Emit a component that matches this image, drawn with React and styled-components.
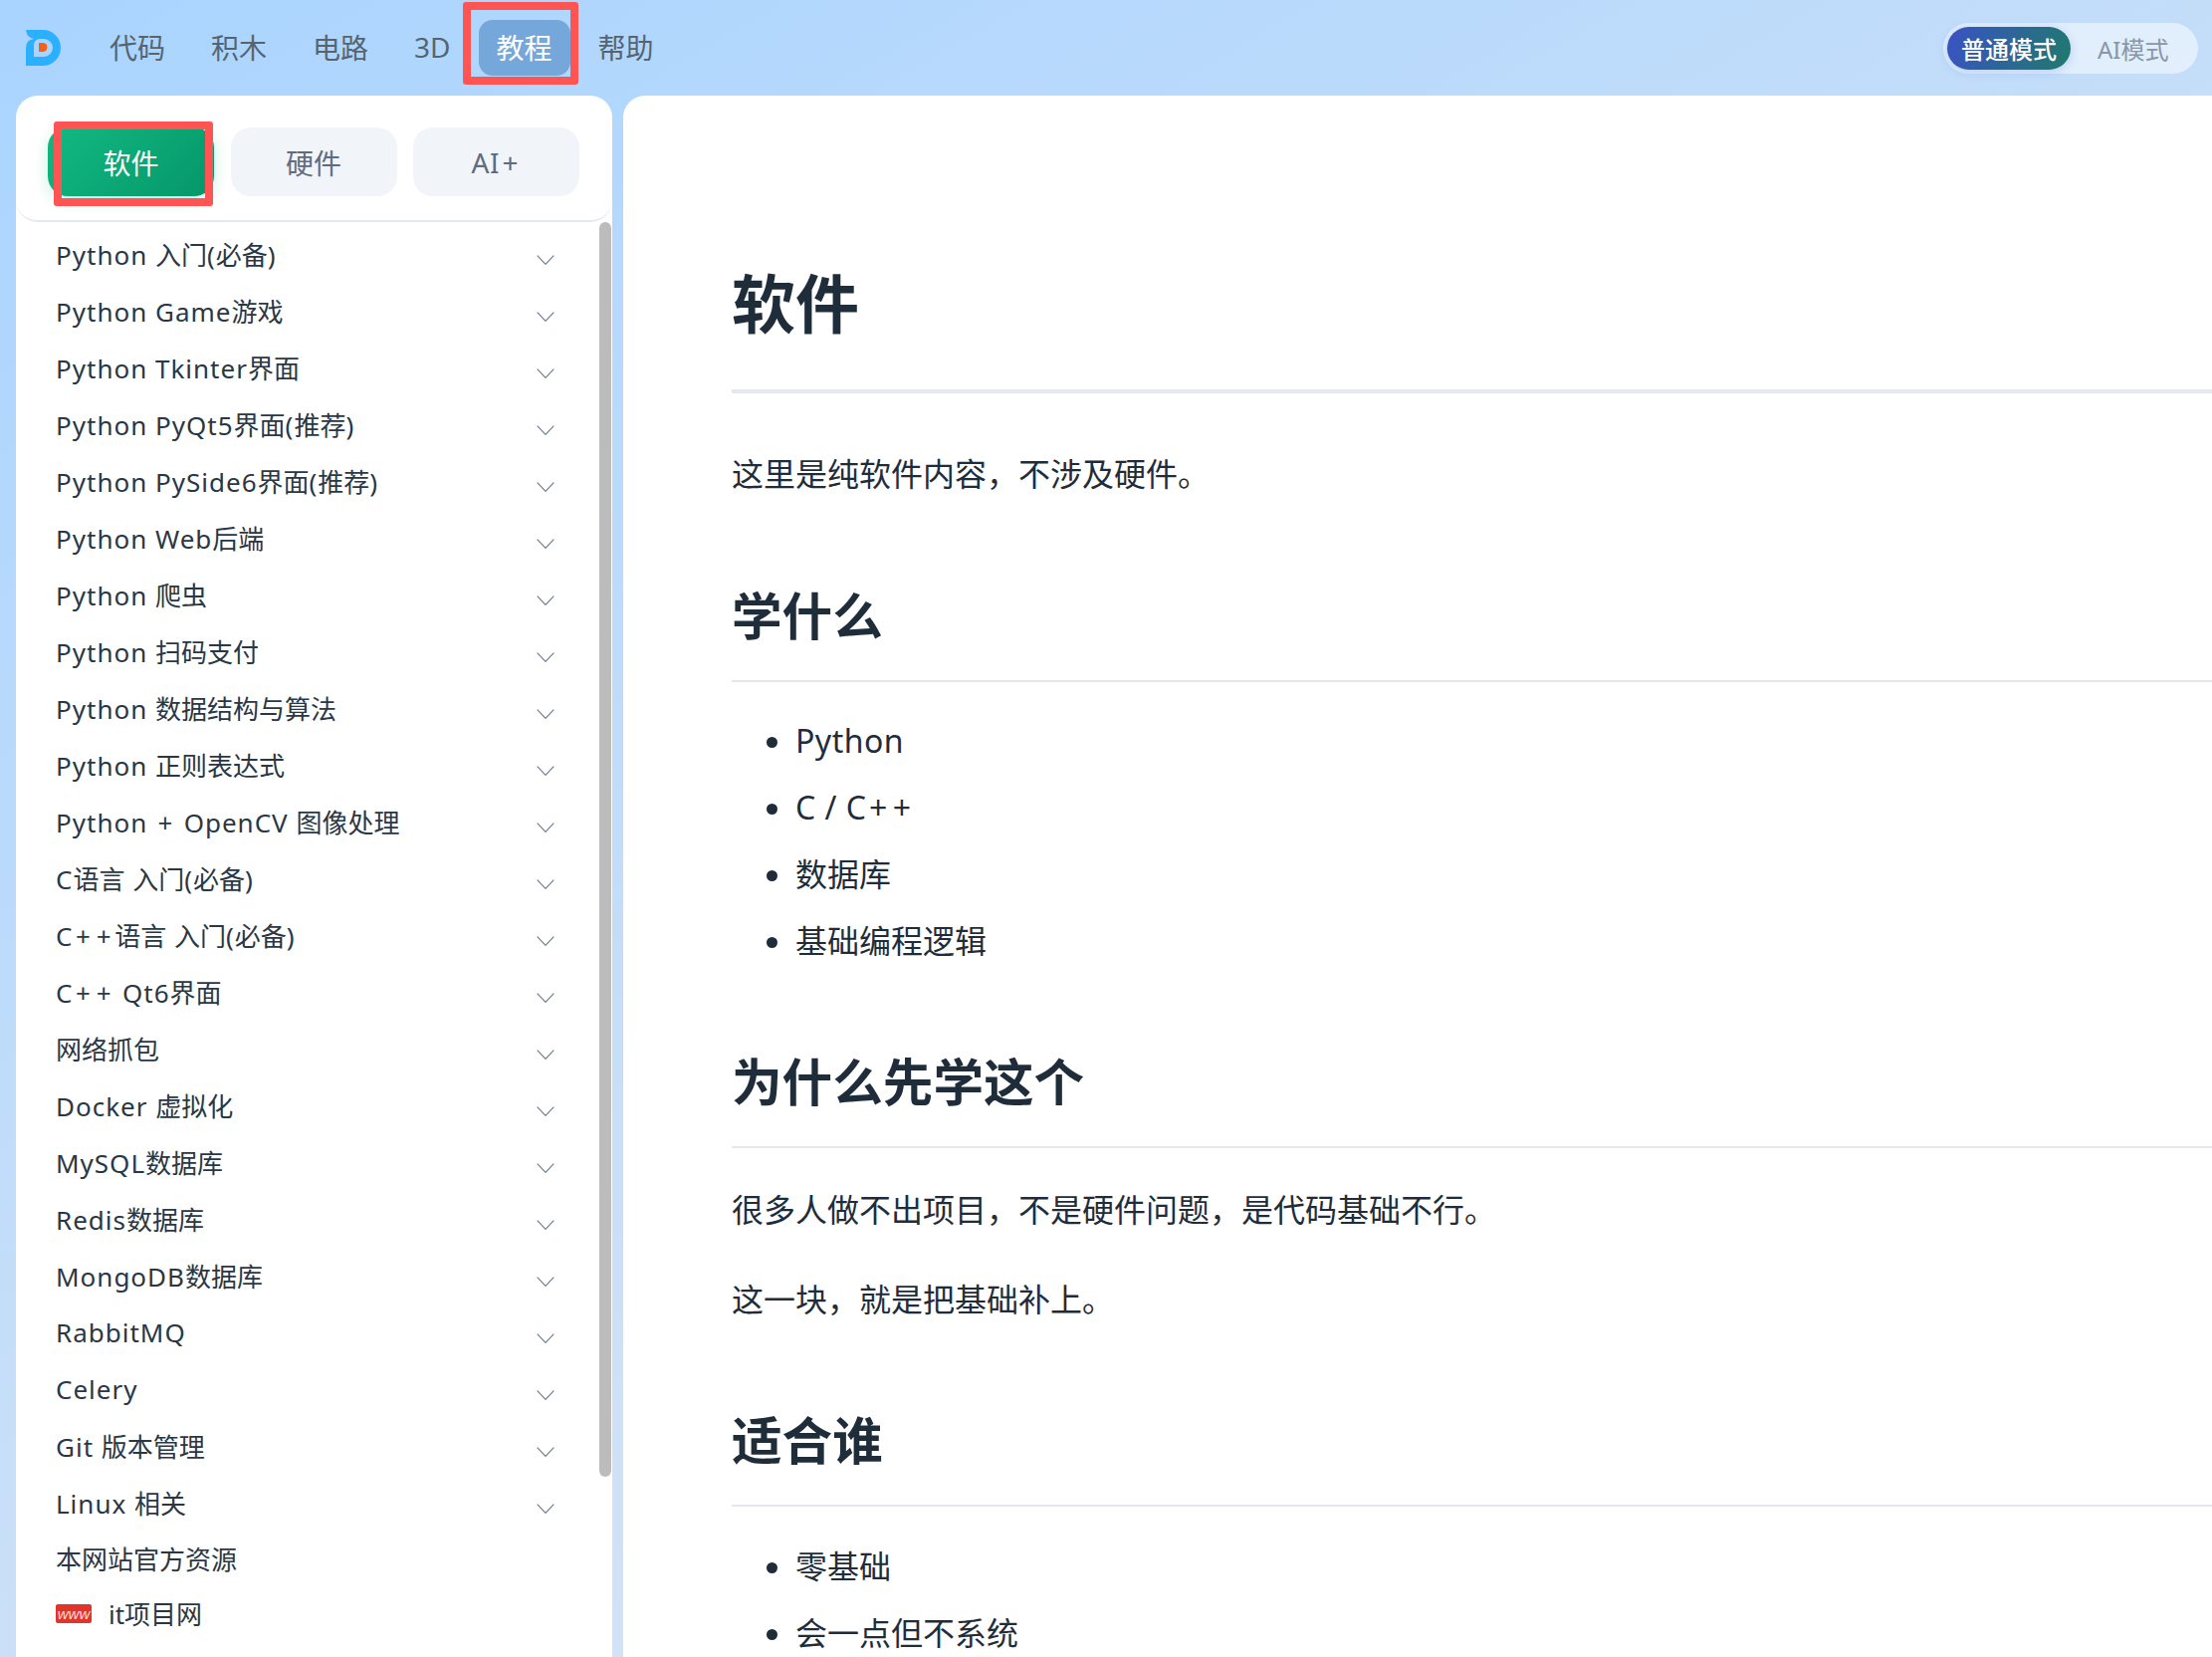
import React from "react";
import styled, { createGlobalStyle } from "styled-components";

const Global = createGlobalStyle`
  html, body { margin: 0; padding: 0; height: 1664px; overflow: hidden; }
  body { font-family: "Noto Sans", "Noto Sans CJK SC", sans-serif; color: #1f2d3a; }
  * { box-sizing: border-box; }
`;

const Page = styled.div`
  width: 2222px;
  height: 1664px;
  overflow: hidden;
  display: flex;
  flex-direction: column;
  background: linear-gradient(150deg, #a9d4ff 0%, #e5e9f2 100%);
`;
const TopBar = styled.header`
  height: 96px;
  flex: none;
  display: flex;
  align-items: flex-start;
  padding: 20px 14px 0 26px;
`;
const Logo = styled.svg`
  width: 36px;
  height: 36px;
  margin: 10px 30px 0 0;
  flex: none;
`;
const Nav = styled.nav`
  display: flex;
  gap: 10px;
`;
const NavItem = styled.div`
  position: relative;
  height: 56px;
  padding: 0 18px 2px;
  display: flex;
  align-items: center;
  border-radius: 14px;
  font-size: 28px;
  color: ${(p) => (p.$active ? "#fff" : "#56646f")};
  background: ${(p) => (p.$active ? "#75a7da" : "transparent")};
`;
const Highlight = styled.span`
  position: absolute;
  border: 8px solid #ff5454;
  border-radius: 3px;
  pointer-events: none;
`;
const NavHighlight = styled(Highlight)`
  left: -16px;
  top: -18px;
  width: 116px;
  height: 83px;
`;
const ModeSwitch = styled.div`
  margin: 3px 0 0 auto;
  width: 256px;
  height: 51px;
  padding: 4px;
  display: flex;
  align-items: center;
  border-radius: 26px;
  background: rgba(255, 255, 255, 0.5);
`;
const ModeOn = styled.div`
  width: 124px;
  height: 43px;
  display: flex;
  align-items: center;
  justify-content: center;
  border-radius: 22px;
  font-size: 24px;
  font-weight: 500;
  color: #fff;
  background: linear-gradient(110deg, #3a52c4, #1f7a6c);
  box-shadow: 0 2px 10px rgba(90, 130, 220, 0.3);
`;
const ModeOff = styled.div`
  margin-left: 27px;
  font-size: 24px;
  color: #8996a7;
`;
const Body = styled.div`
  flex: 1;
  min-height: 0;
  display: flex;
  gap: 11px;
  padding-left: 16px;
`;
const Sidebar = styled.aside`
  width: 599px;
  flex: none;
  background: #fff;
  border-radius: 22px 22px 0 0;
  display: flex;
  flex-direction: column;
`;
const TabBar = styled.div`
  height: 127px;
  flex: none;
  display: flex;
  gap: 16.5px;
  padding: 32px 0 0 32px;
  border-bottom: 2px solid #e4e8f3;
  border-radius: 0 0 22px 22px;
`;
const Tab = styled.div`
  position: relative;
  width: 167px;
  height: 69px;
  display: flex;
  align-items: center;
  justify-content: center;
  border-radius: 20px;
  font-size: 28px;
  color: ${(p) => (p.$active ? "#fff" : "#5f6c80")};
  background: ${(p) =>
    p.$active ? "linear-gradient(135deg, #12b981, #059669)" : "#f1f4f9"};
  box-shadow: ${(p) => (p.$active ? "0 4px 16px rgba(16,185,129,.22)" : "none")};
`;
const TabHighlight = styled(Highlight)`
  left: 6px;
  top: -6px;
  width: 160px;
  height: 85px;
`;
const SideBody = styled.div`
  flex: 1;
  min-height: 0;
  display: flex;
`;
const Tree = styled.ul`
  flex: 1;
  list-style: none;
  margin: 0;
  padding: 3px 45px 0 40px;
`;
const TreeRow = styled.li`
  height: 57px;
  display: flex;
  align-items: center;
  justify-content: space-between;
  font-size: 26px;
  color: #2a3744;
`;
const Chevron = styled.svg`
  width: 18px;
  height: 10px;
  margin-top: 12px;
  flex: none;
`;
const PlainLink = styled.li`
  height: 55px;
  display: flex;
  align-items: center;
  gap: 17px;
  font-size: 26px;
  color: #2a3744;
`;
const WwwIcon = styled.svg`
  width: 36px;
  height: 19px;
  flex: none;
  margin-top: 2px;
`;
const Thumb = styled.div`
  width: 12px;
  height: 1260px;
  margin-right: 1px;
  flex: none;
  background: #bcbcbc;
  border-radius: 6px;
`;
const Main = styled.main`
  flex: 1;
  min-width: 0;
  background: #fff;
  border-radius: 22px 0 0 0;
  padding: 171px 0 0 109px;
  overflow: hidden;
  color: #1f2d3a;
`;
const H1 = styled.h1`
  margin: 0;
  font-size: 64px;
  line-height: 76px;
  font-weight: 700;
  padding-bottom: 48px;
  border-bottom: 4px solid #e4e7ed;
`;
const H2 = styled.h2`
  margin: ${(p) => p.$top}px 0 0;
  font-size: 50.6px;
  line-height: 62px;
  font-weight: 700;
  padding-bottom: 33px;
  border-bottom: 2px solid #e4e7ed;
`;
const Para = styled.p`
  margin: ${(p) => p.$top}px 0 0;
  font-size: 32px;
  line-height: 54px;
`;
const List = styled.ul`
  margin: ${(p) => p.$top}px 0 0;
  padding: 0 0 0 64px;
`;
const Item = styled.li`
  font-size: 32px;
  line-height: 54px;
  margin-bottom: 13px;
  &:last-child { margin-bottom: 0; }
`;
const Latin = styled.span`
  letter-spacing: ${(p) => p.$track}px;
  white-space: pre;
`;
const Plus = styled.span`
  padding: 0 2.5px;
  margin-right: ${(p) => p.$track}px;
`;

/* The source font sets Latin runs wider than its CJK glyphs: track only those runs. */
function Spaced({ text, track = 1 }) {
  const parts = text.split(/(\+|[A-Za-z0-9 /()]+)/).filter(Boolean);
  return (
    <span>
      {parts.map((t, i) =>
        t === "+" ? (
          <Plus key={i} $track={track}>+</Plus>
        ) : /^[A-Za-z0-9 /()]+$/.test(t) ? (
          <Latin key={i} $track={track}>{t}</Latin>
        ) : (
          t
        )
      )}
    </span>
  );
}

const rows = [
  "Python 入门(必备)", "Python Game游戏", "Python Tkinter界面", "Python PyQt5界面(推荐)",
  "Python PySide6界面(推荐)", "Python Web后端", "Python 爬虫", "Python 扫码支付",
  "Python 数据结构与算法", "Python 正则表达式", "Python + OpenCV 图像处理", "C语言 入门(必备)",
  "C++语言 入门(必备)", "C++ Qt6界面", "网络抓包", "Docker 虚拟化", "MySQL数据库", "Redis数据库",
  "MongoDB数据库", "RabbitMQ", "Celery", "Git 版本管理", "Linux 相关",
];

export default function App() {
  return (
    <Page>
      <Global />
      <TopBar>
        <Logo viewBox="0 0 36 36">
          <path
            fillRule="evenodd"
            fill="#2bb0ff"
            d="M0 0H17A18 18 0 0 1 17 36H0V18Q0 10 8 9Q1 8 0 0ZM14 9A6 6 0 0 0 8 15V27H18A9 9 0 0 0 18 9Z"
          />
          <path fill="#f0621a" d="M13 13H17A4.5 4.5 0 0 1 17 22H13Z" />
        </Logo>
        <Nav>
          <NavItem>代码</NavItem>
          <NavItem>积木</NavItem>
          <NavItem>电路</NavItem>
          <NavItem>3D</NavItem>
          <NavItem $active>
            教程
            <NavHighlight />
          </NavItem>
          <NavItem>帮助</NavItem>
        </Nav>
        <ModeSwitch>
          <ModeOn>普通模式</ModeOn>
          <ModeOff>AI模式</ModeOff>
        </ModeSwitch>
      </TopBar>
      <Body>
        <Sidebar>
          <TabBar>
            <Tab $active>
              软件
              <TabHighlight />
            </Tab>
            <Tab>硬件</Tab>
            <Tab>
              <Spaced text="AI+" track={0.5} />
            </Tab>
          </TabBar>
          <SideBody>
            <Tree>
              {rows.map((r) => (
                <TreeRow key={r}>
                  <Spaced text={r} />
                  <Chevron viewBox="0 0 18 10">
                    <path d="M0.7 0.7L9 9.3L17.3 0.7" fill="none" stroke="#6b7a8d" strokeWidth="1.2" />
                  </Chevron>
                </TreeRow>
              ))}
              <PlainLink>本网站官方资源</PlainLink>
              <PlainLink>
                <WwwIcon viewBox="0 0 36 19">
                  <rect width="36" height="19" rx="2" fill="#e0352b" />
                  <text x="18" y="14.5" textAnchor="middle" fontSize="15" fontStyle="italic" fill="#ffd9d6" fontFamily="Liberation Sans">
                    www
                  </text>
                </WwwIcon>
                it项目网
              </PlainLink>
            </Tree>
            <Thumb />
          </SideBody>
        </Sidebar>
        <Main>
          <H1>软件</H1>
          <Para $top={54}>这里是纯软件内容，不涉及硬件。</Para>
          <H2 $top={85}>学什么</H2>
          <List $top={32}>
            <Item><Spaced text="Python" track={0.5} /></Item>
            <Item><Spaced text="C / C++" track={0.5} /></Item>
            <Item>数据库</Item>
            <Item>基础编程逻辑</Item>
          </List>
          <H2 $top={84}>为什么先学这个</H2>
          <Para $top={35}>很多人做不出项目，不是硬件问题，是代码基础不行。</Para>
          <Para $top={36}>这一块，就是把基础补上。</Para>
          <H2 $top={84}>适合谁</H2>
          <List $top={33}>
            <Item>零基础</Item>
            <Item>会一点但不系统</Item>
          </List>
        </Main>
      </Body>
    </Page>
  );
}
